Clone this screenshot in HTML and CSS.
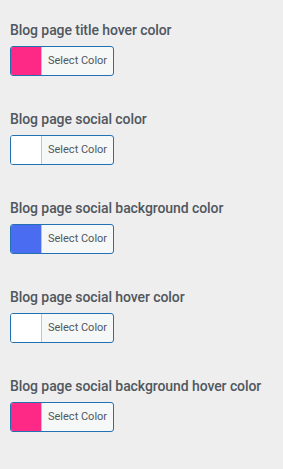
FILE: index.html
```html
<!DOCTYPE html>
<html lang="en">
<head>
    <meta charset="UTF-8">
    <title>Blog colors</title>
    <link rel="stylesheet" href="styles.css">
</head>
<body>
    <div class="panel">
        <div class="control">
            <span class="control-title">Blog page title hover color</span>
            <button class="color-btn"><span class="swatch pink"></span><span class="label">Select Color</span></button>
        </div>
        <div class="control">
            <span class="control-title">Blog page social color</span>
            <button class="color-btn"><span class="swatch white"></span><span class="label">Select Color</span></button>
        </div>
        <div class="control">
            <span class="control-title">Blog page social background color</span>
            <button class="color-btn"><span class="swatch blue"></span><span class="label">Select Color</span></button>
        </div>
        <div class="control">
            <span class="control-title">Blog page social hover color</span>
            <button class="color-btn"><span class="swatch white"></span><span class="label">Select Color</span></button>
        </div>
        <div class="control">
            <span class="control-title">Blog page social background hover color</span>
            <button class="color-btn"><span class="swatch pink"></span><span class="label">Select Color</span></button>
        </div>
    </div>
</body>
</html>
```

FILE: styles.css
```css
body {
    margin: 0;
    background-color: #eeeeee;
    font-family: Roboto, "Liberation Sans", sans-serif;
}

.panel {
    padding: 20px 10px;
}

.control {
    display: flex;
    flex-direction: column;
    align-items: flex-start;
    margin-bottom: 33px;
}

.control-title {
    font-size: 14px;
    font-weight: 500;
    line-height: 20px;
    letter-spacing: -0.08px;
    color: #50575e;
    margin-bottom: 6px;
}

.color-btn {
    display: flex;
    align-items: stretch;
    width: 104px;
    height: 30px;
    padding: 0;
    border: 1px solid #2271b1;
    border-radius: 3px;
    background-color: #f6f7f7;
    overflow: hidden;
    cursor: pointer;
}

.swatch {
    width: 30px;
    border-right: 1px solid #c3c4c7;
}

.swatch.pink {
    background-color: #fe2886;
}

.swatch.white {
    background-color: #ffffff;
}

.swatch.blue {
    background-color: #4a6cf0;
}

.label {
    display: flex;
    align-items: center;
    padding-left: 6px;
    padding-bottom: 1px;
    font-family: Roboto, "Liberation Sans", sans-serif;
    font-size: 11px;
    color: #50575e;
}
```
